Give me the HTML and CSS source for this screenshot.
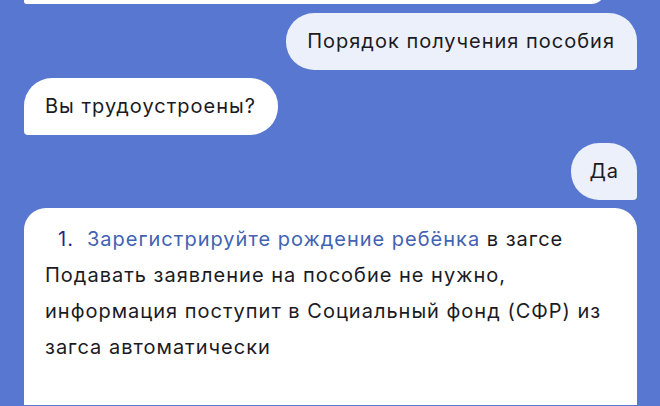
FILE: index.html
```html
<!DOCTYPE html>
<html lang="ru">
<head>
<meta charset="utf-8">
<link rel="stylesheet" href="styles.css">
</head>
<body>
<div class="chat">
  <div class="msg bot prev"></div>
  <div class="msg user">Порядок получения пособия</div>
  <div class="msg bot">Вы трудоустроены?</div>
  <div class="msg user short">Да</div>
  <div class="msg bot answer">
    <div class="item"><span class="num">1.</span><span><a class="link">Зарегистрируйте рождение ребёнка</a> в загсе</span></div>
    <p class="para">Подавать заявление на пособие не нужно, информация поступит в Социальный фонд (СФР) из загса автоматически</p>
  </div>
</div>
</body>
</html>
```
FILE: styles.css
```css
html, body {
  margin: 0;
  padding: 0;
  background: #5877d0;
  height: 100%;
  overflow: hidden;
}
.chat {
  display: flex;
  flex-direction: column;
  gap: 8px;
  padding: 0 23px 0 24px;
  font-family: Inter, Roboto, "Liberation Sans", sans-serif;
  font-size: 20px;
  letter-spacing: 1px;
  color: #1b1b1f;
}
.msg {
  padding: 17px 22px 17px 21px;
  line-height: 23px;
  border-radius: 28px;
}
.user {
  align-self: flex-end;
  background: #ebf0fa;
  border-bottom-right-radius: 4px;
}
.short {
  padding-left: 18px;
  padding-right: 18px;
}
.bot {
  align-self: flex-start;
  background: #ffffff;
  border-bottom-left-radius: 4px;
}
.prev {
  align-self: stretch;
  margin-right: 31px;
  margin-top: -26px;
  height: 30px;
  padding: 0;
  margin-bottom: 1px;
}
.answer {
  align-self: stretch;
  border-radius: 22px 22px 0 0;
  padding: 13px 21px 40px 21px;
  line-height: 36px;
}
.item {
  display: flex;
}
.num {
  color: #1f2a8a;
  margin-left: 13px;
  width: 29px;
}
.link {
  color: #4262b3;
}
.para {
  margin: 0;
}
```
